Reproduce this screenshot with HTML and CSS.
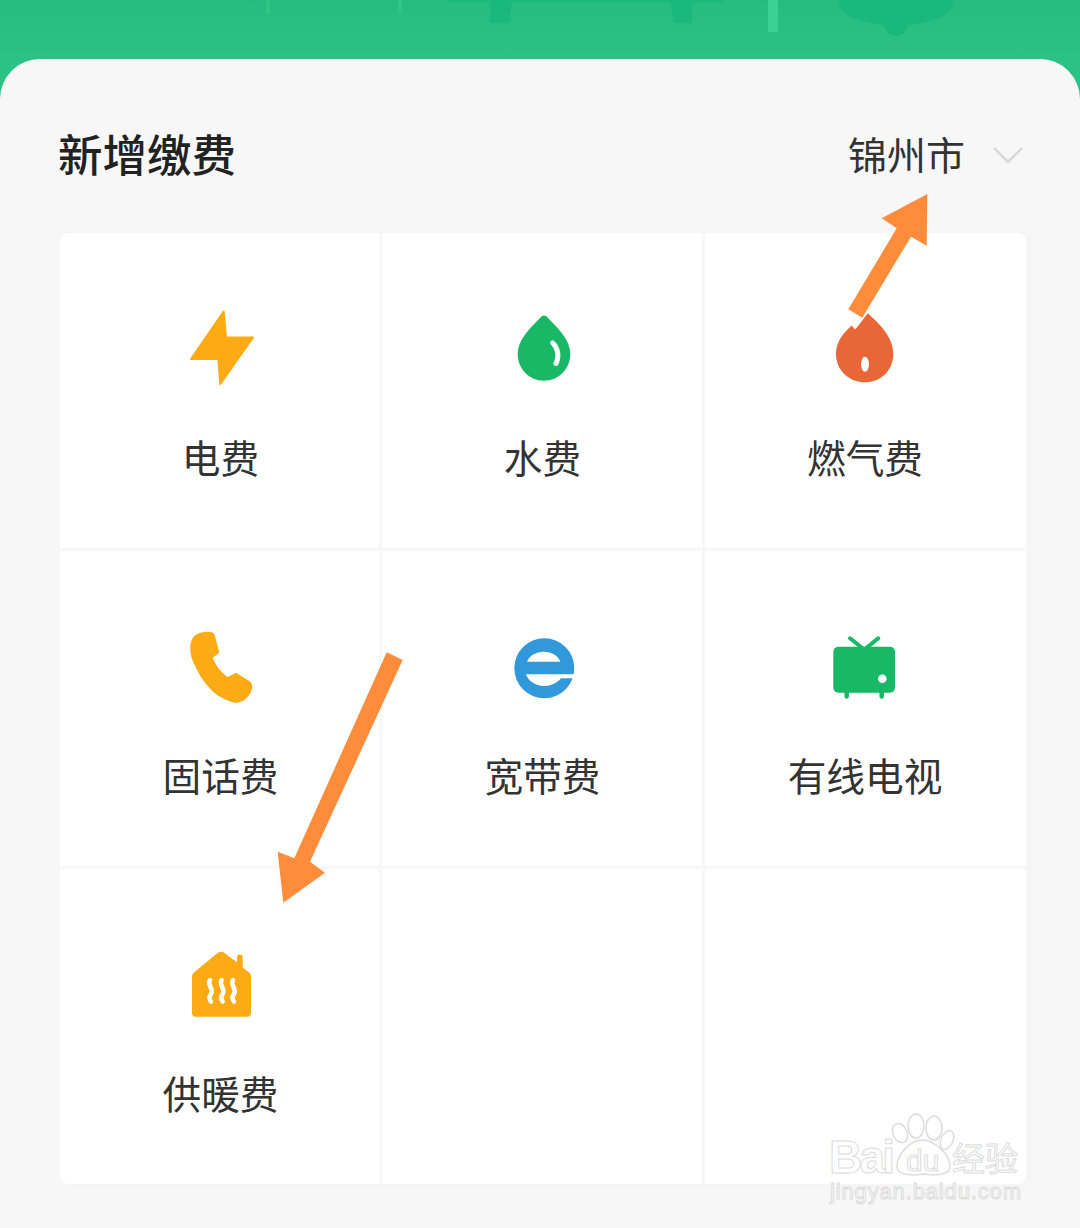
FILE: index.html
```html
<!DOCTYPE html>
<html lang="zh-CN">
<head>
    <meta charset="UTF-8">
    <meta name="viewport" content="width=device-width, initial-scale=1.0">
    <title>新增缴费</title>
    <link rel="stylesheet" href="styles.css">
</head>
<body>
    <div class="page">
        <div class="banner">
            <svg class="banner-art" width="1080" height="59" viewBox="0 0 1080 59">
                <rect x="266" y="0" width="4" height="14" fill="#2fc587"/>
                <rect x="398" y="0" width="4" height="14" fill="#2fc587"/>
                <rect x="448" y="0" width="275" height="2" fill="#1ab87c"/>
                <path d="M490 0H512L509 23H490ZM670 0H692V23H674Z" fill="#1ab87c"/>
                <rect x="768" y="0" width="10" height="32" fill="#3bd094"/>
                <path d="M838 0H954C954 12 940 22 908 25C906 32 902 36 896 36C890 36 886 32 884 25C852 22 838 12 838 0Z" fill="#1ab87c"/>
            </svg>
        </div>

        <div class="panel">
            <div class="panel-head">
                <h1 class="panel-title">新增缴费</h1>
                <div class="city">
                    <span class="city-name">锦州市</span>
                    <svg class="city-arrow" width="30" height="17" viewBox="0 0 30 17">
                        <path d="M1 1L15 15L29 1" fill="none" stroke="#d9d9d9" stroke-width="2.5"/>
                    </svg>
                </div>
            </div>

            <div class="fee-grid">
                <div class="fee-cell">
                    <svg class="fee-icon" viewBox="0 0 80 80">
                        <path d="M42.7 5.5L45 31.5H72L39.3 78L37.3 53H10Z" fill="#fdab14" stroke="#fdab14" stroke-width="2" stroke-linejoin="round"/>
                    </svg>
                    <span class="fee-name">电费</span>
                </div>
                <div class="fee-cell">
                    <svg class="fee-icon" viewBox="0 0 80 80">
                        <path d="M41 9.5C43 9.5 44 11 46 13C57 24 67.300 35 67.300 48C67.300 63 55.500 74.700 41 74.700C26.500 74.700 14.700 63 14.700 48C14.700 35 25 24 36 13C38 11 39 9.500 41 9.500Z" fill="#18b866"/>
                        <path d="M49.700 37C55 42 56.500 50 53 57.500" fill="none" stroke="#fff" stroke-width="5" stroke-linecap="round"/>
                    </svg>
                    <span class="fee-name">水费</span>
                </div>
                <div class="fee-cell">
                    <svg class="fee-icon" viewBox="0 0 80 80">
                        <path d="M42.700 7.300C56 19 68.300 32 68.300 48C68.300 64 56 76.300 40 76.300C24 76.300 11 64 11 48C11 36 18 27 26.700 19.500L30 23.500L33.500 19.500Z" fill="#e96737"/>
                        <ellipse cx="40" cy="58.300" rx="4" ry="7.500" fill="#fff"/>
                    </svg>
                    <span class="fee-name">燃气费</span>
                </div>

                <div class="fee-cell">
                    <svg class="fee-icon" viewBox="0 0 80 80">
                        <path d="M26.700 7.700C31 7.700 33 9 34 12L38.300 28.700L31.700 33.700C35 42 40 48 46.700 53L55 48.700L69 57.500C71 59 71.500 62 71 65.300C69 71 66 75 61.700 77C58 78.700 55 79 53.300 78.700C45 76 38 73 33.300 68.700C26 62 20 54 16.700 47C12 38 9.300 32 9.300 25.300C9.300 19 10.500 15 13.300 12C17 9 22 7.700 26.700 7.700Z" fill="#fdab14"/>
                    </svg>
                    <span class="fee-name">固话费</span>
                </div>
                <div class="fee-cell">
                    <svg class="fee-icon" viewBox="0 0 80 80">
                        <circle cx="41.300" cy="44.300" r="30" fill="#3199db"/>
                        <path d="M24 37.700C26 32 33 27.700 40.700 27.700C48.500 27.700 55.500 32 57.300 37.700Z" fill="#fff"/>
                        <path d="M23 50.300H73V54.300H58C54 59 48 62 41.300 62C32 62 25.500 57 23 50.300Z" fill="#fff"/>
                    </svg>
                    <span class="fee-name">宽带费</span>
                </div>
                <div class="fee-cell">
                    <svg class="fee-icon" viewBox="0 0 80 80">
                        <path d="M25 14.300L38.500 25M53.300 14.300L40 25" fill="none" stroke="#18b866" stroke-width="4" stroke-linecap="round"/>
                        <path d="M21.700 66V72.500M56.700 66V72.500" fill="none" stroke="#18b866" stroke-width="4.500" stroke-linecap="round"/>
                        <rect x="8.300" y="22.700" width="61.700" height="46" rx="5" fill="#18b866"/>
                        <circle cx="57.300" cy="54.700" r="4.300" fill="#fff"/>
                    </svg>
                    <span class="fee-name">有线电视</span>
                </div>

                <div class="fee-cell">
                    <svg class="fee-icon" viewBox="0 0 80 80">
                        <path d="M36.500 11C38.500 9.300 41.500 9.300 43.500 11L56 20.500V15C56 13.500 57 12.500 58.800 12.500C60.600 12.500 61.700 13.500 61.700 15V25.500L68 30.500C69.500 31.700 70 33 70 35V71.500C70 73.500 68.500 74.700 66.500 74.700H14.500C12.500 74.700 11 73.500 11 71.500V35C11 33 11.500 31.700 13 30.500Z" fill="#fdab14"/>
                        <path d="M29 38C25.500 43 33.500 47 30 52C27.500 55 28 57 30 59.500M40.700 38C37.200 43 45.200 47 41.700 52C39.200 55 39.700 57 41.700 59.500M52 38C48.500 43 56.500 47 53 52C50.500 55 51 57 53 59.500" fill="none" stroke="#fff" stroke-width="4.500" stroke-linecap="round"/>
                    </svg>
                    <span class="fee-name">供暖费</span>
                </div>
                <div class="fee-cell"></div>
                <div class="fee-cell"></div>
            </div>
        </div>

        <!-- 箭头标注 -->
        <svg class="overlay" width="1080" height="1228" viewBox="0 0 1080 1228">
            <polygon points="927.3,194 926.7,245.7 911,236.7 862.300,317.700 848.300,309.300 896.700,228.300 881.700,218.300" fill="#ff8c3b"/>
            <polygon points="386.700,652.300 402.700,660 310,861.700 325,872.700 283.300,902.700 277.700,851.700 294.300,858.300" fill="#ff8c3b"/>
        </svg>

        <!-- 水印 -->
        <svg class="overlay" width="1080" height="1228" viewBox="0 0 1080 1228">
            <g fill="none" stroke="#dcdcdc" stroke-width="1.500">
                <ellipse cx="900" cy="1133" rx="7" ry="10" transform="rotate(-25 900 1133)"/>
                <ellipse cx="916" cy="1126" rx="8" ry="12"/>
                <ellipse cx="934" cy="1128" rx="8" ry="12"/>
                <ellipse cx="947" cy="1140" rx="6" ry="10" transform="rotate(25 947 1140)"/>
                <path d="M922 1140C935 1140 950 1155 950 1166C950 1175 938 1176 924 1174C910 1176 897 1175 897 1166C897 1155 910 1140 922 1140Z"/>
            </g>
            <g class="mark-text">
                <text class="mark-bold" x="829" y="1173" font-size="46" textLength="66">Bai</text>
                <text x="906" y="1171" font-size="30">du</text>
                <text x="952" y="1171" font-size="33">经验</text>
                <text x="830" y="1199" font-size="22" textLength="191">jingyan.baidu.com</text>
            </g>
        </svg>
    </div>
</body>
</html>
```

FILE: styles.css
```css
body {
    margin: 0;
    font-family: "Liberation Sans", "Noto Sans CJK SC", sans-serif;
}
.page {
    position: relative;
    width: 1080px;
    height: 1228px;
    overflow: hidden;
    background: linear-gradient(180deg, #27bc7f 0, #2dc285 60px);
}
.banner {
    height: 59px;
}
.banner-art {
    display: block;
}
.panel {
    height: 1169px;
    background: #f7f7f7;
    border-radius: 40px 40px 0 0;
}
.panel-head {
    display: flex;
    justify-content: space-between;
    align-items: center;
    height: 56px;
    padding: 66px 57px 52px 58px;
}
.panel-title {
    margin: 0;
    font-family: "Noto Sans CJK SC", sans-serif;
    font-size: 44.5px;
    font-weight: 500;
    line-height: 56px;
    color: #222;
}
.city {
    display: flex;
    align-items: center;
    gap: 28px;
}
.city-name {
    font-family: "Noto Sans CJK SC", sans-serif;
    font-size: 39px;
    line-height: 56px;
    color: #333;
}
.city-arrow {
    margin-top: 5px;
}
.fee-grid {
    display: grid;
    grid-template-columns: 319px 320px 321px;
    grid-template-rows: repeat(3, 315px);
    gap: 3px;
    width: 966px;
    margin-left: 60px;
    border-radius: 8px;
    overflow: hidden;
    box-shadow: 0 0 16px rgba(0, 0, 0, 0.015);
}
.fee-cell {
    display: flex;
    flex-direction: column;
    align-items: center;
    padding-top: 73px;
    background: #fff;
}
.fee-cell:nth-child(3n+1) {
    padding-left: 2px;
}
.fee-cell:nth-child(3n+2) {
    padding-left: 1px;
}
.fee-cell:nth-child(3n) {
    padding-right: 1px;
}
.fee-icon {
    display: block;
    width: 80px;
    height: 80px;
    margin-bottom: 45px;
}
.fee-name {
    font-family: "Noto Sans CJK SC", sans-serif;
    font-size: 38.7px;
    line-height: 50px;
    color: #333;
}
.overlay {
    position: absolute;
    top: 0;
    left: 0;
}
.mark-text text {
    font-family: "Liberation Sans", "Noto Sans CJK SC", sans-serif;
    fill: rgba(255, 255, 255, 0.6);
    stroke: #dcdcdc;
    stroke-width: 1;
}
.mark-text .mark-bold {
    font-weight: 700;
}
```
